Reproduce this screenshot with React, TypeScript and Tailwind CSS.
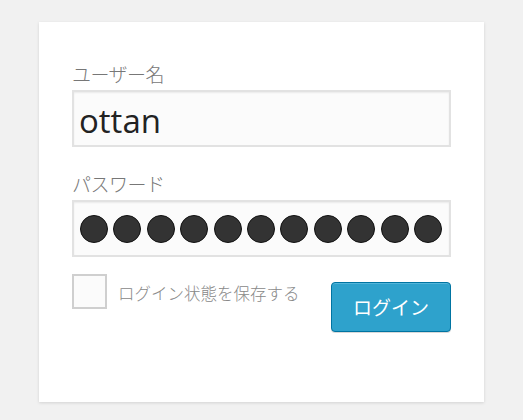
import React from "react";

export default function App() {
  const dots = Array.from({ length: 11 });
  return (
    <div
      className="w-[523px] h-[420px] bg-[#f1f1f1] pt-[22px] pl-[39px]"
      style={{ fontFamily: '"Open Sans", "Noto Sans CJK JP", sans-serif' }}
    >
      <div className="w-[445px] h-[380px] bg-white shadow-[0_1px_3px_rgba(0,0,0,0.13)] pt-[39px] px-[33px]">
        <div className="text-[19px] leading-[26px] text-[#777] font-light font-['Noto_Sans_CJK_JP',sans-serif] tracking-[-0.5px]">
          ユーザー名
        </div>
        <div className="mt-[3px] h-[57px] w-[379px] border-2 border-[#e2e2e2] bg-[#fbfbfb] shadow-[inset_0_1px_2px_rgba(0,0,0,0.07)] flex items-center pl-[5px]">
          <span className="text-[33px] text-[#222] font-['Open_Sans',sans-serif] leading-none mt-[3px]">ottan</span>
        </div>
        <div className="mt-[24px] text-[19px] leading-[26px] text-[#777] font-light font-['Noto_Sans_CJK_JP',sans-serif] tracking-[-0.5px]">
          パスワード
        </div>
        <div className="mt-[3px] h-[57px] w-[379px] border-2 border-[#e2e2e2] bg-[#fbfbfb] shadow-[inset_0_1px_2px_rgba(0,0,0,0.07)] flex items-center pl-[6px] gap-[5.4px]">
          {dots.map((_, i) => (
            <span key={i} className="block w-[28px] h-[28px] rounded-full bg-[#333] border border-[#111] shrink-0" />
          ))}
        </div>
        <div className="mt-[17px] flex items-start justify-between w-[379px]">
          <div className="flex items-start">
            <div className="w-[35px] h-[35px] border-2 border-[#cfcfcf] bg-[#fbfbfb]" />
            <span className="ml-[11px] mt-[9px] text-[16.5px] leading-[20px] text-[#888] font-light font-['Noto_Sans_CJK_JP',sans-serif]">
              ログイン状態を保存する
            </span>
          </div>
          <button className="mt-[8px] w-[120px] h-[50px] rounded-[4px] bg-[#2ea2cc] border border-[#0074a2] shadow-[inset_0_1px_0_rgba(120,200,230,0.5),0_1px_0_rgba(0,0,0,0.15)] text-white text-[19px] font-['Noto_Sans_CJK_JP',sans-serif] flex items-center justify-center">
            ログイン
          </button>
        </div>
      </div>
    </div>
  );
}
